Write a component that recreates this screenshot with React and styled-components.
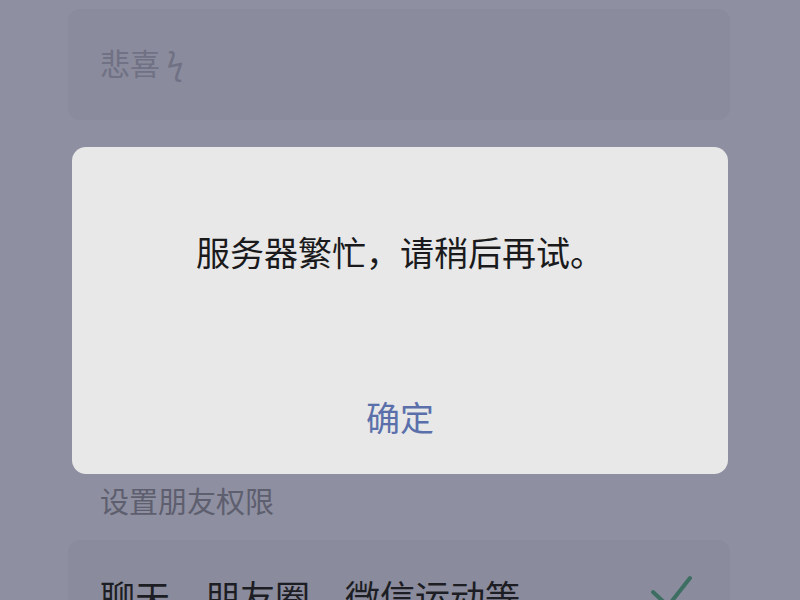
import styled, { createGlobalStyle } from "styled-components";

const GlobalStyle = createGlobalStyle`
  html, body {
    margin: 0;
    padding: 0;
    background: #8e8fa0;
    font-family: "Noto Sans CJK SC", "Noto Sans", sans-serif;
  }
  #root {
    height: 600px;
    overflow: hidden;
  }
`;

const Page = styled.div`
  position: relative;
  height: 600px;
  overflow: hidden;
  padding: 9px 70px 0 68px;
  box-sizing: border-box;
`;

const Card = styled.div`
  background: #8a8b9c;
  border-radius: 12px;
  height: ${(p) => p.$height}px;
  display: flex;
  align-items: ${(p) => p.$align || "center"};
  justify-content: space-between;
  padding: ${(p) => p.$pad || "0 32px"};
  box-sizing: border-box;
`;

const Signature = styled.div`
  font-size: 30px;
  color: #707184;
  margin-top: -6px;
  white-space: pre;
`;

const Hidden = styled.div`
  height: 354px;
`;

const SectionLabel = styled.div`
  font-size: 29px;
  color: #5d5e6e;
  padding-left: 32px;
  height: 66px;
  line-height: 52px;
`;

const OptionText = styled.div`
  font-size: 35px;
  color: #1d1e24;
  line-height: 40px;
  margin-top: 36px;
`;

const Check = styled.svg`
  width: 48px;
  height: 40px;
  margin-top: 32px;
  margin-right: 4px;
`;

const Dialog = styled.div`
  position: absolute;
  left: 72px;
  top: 147px;
  width: 656px;
  height: 327px;
  background: #e8e8e8;
  border-radius: 14px;
  display: flex;
  flex-direction: column;
  align-items: center;
`;

const Message = styled.div`
  font-size: 34px;
  color: #1a1a1c;
  margin-top: 81px;
  line-height: 48px;
`;

const Confirm = styled.div`
  font-size: 34px;
  color: #5b70ab;
  margin-top: 117px;
  line-height: 48px;
`;

export default function App() {
  return (
    <>
      <GlobalStyle />
      <Page>
        <Card $height={111}>
          <Signature>悲喜 ϟ</Signature>
        </Card>
        <Hidden />
        <SectionLabel>设置朋友权限</SectionLabel>
        <Card $height={120} $align="flex-start" $pad="0 30px 0 32px">
          <OptionText>聊天、朋友圈、微信运动等</OptionText>
          <Check viewBox="0 0 48 40">
            <path d="M5 20 L20 34 L42 6" fill="none" stroke="#3d6e62" strokeWidth="4" strokeLinecap="round" strokeLinejoin="round" />
          </Check>
        </Card>
        <Dialog>
          <Message>服务器繁忙，请稍后再试。</Message>
          <Confirm>确定</Confirm>
        </Dialog>
      </Page>
    </>
  );
}
